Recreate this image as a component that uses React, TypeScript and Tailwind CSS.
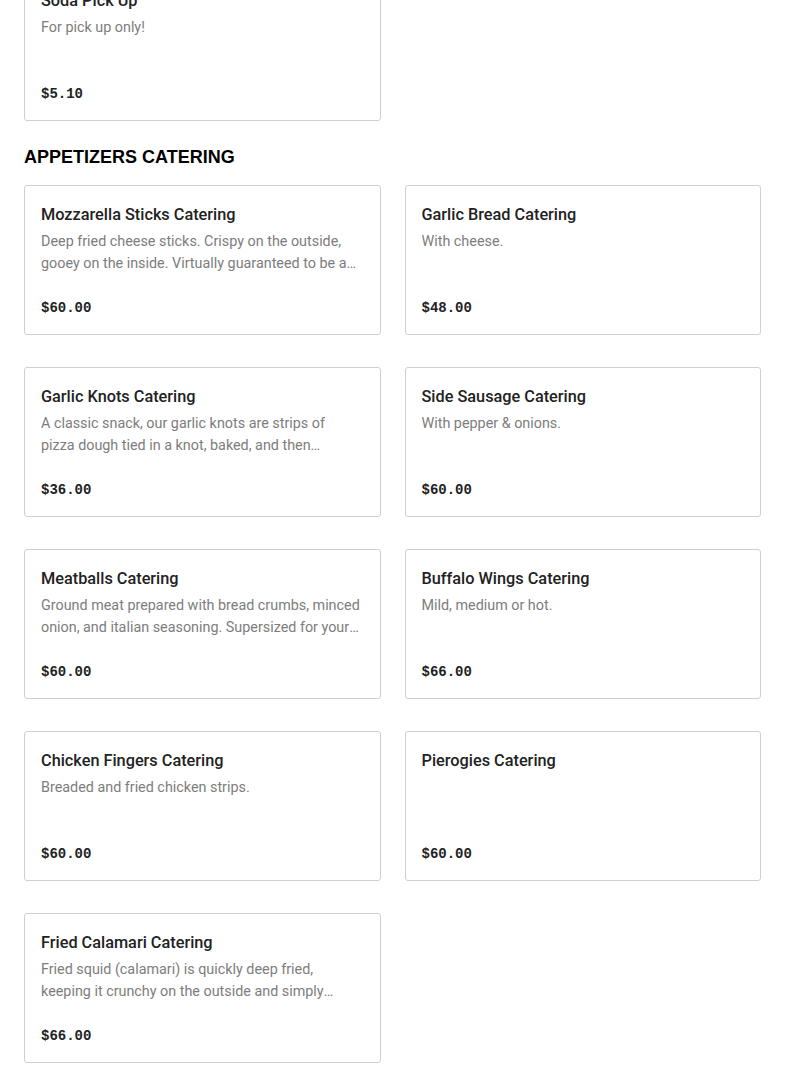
import React from "react";

type Item = { name: string; desc?: string; price: string };

const items: Item[] = [
  {
    name: "Mozzarella Sticks Catering",
    desc: "Deep fried cheese sticks. Crispy on the outside, gooey on the inside. Virtually guaranteed to be a crowd pleaser at any party or event.",
    price: "$60.00",
  },
  { name: "Garlic Bread Catering", desc: "With cheese.", price: "$48.00" },
  {
    name: "Garlic Knots Catering",
    desc: "A classic snack, our garlic knots are strips of pizza dough tied in a knot, baked, and then brushed with garlic butter.",
    price: "$36.00",
  },
  { name: "Side Sausage Catering", desc: "With pepper & onions.", price: "$60.00" },
  {
    name: "Meatballs Catering",
    desc: "Ground meat prepared with bread crumbs, minced onion, and italian seasoning. Supersized for your event.",
    price: "$60.00",
  },
  { name: "Buffalo Wings Catering", desc: "Mild, medium or hot.", price: "$66.00" },
  { name: "Chicken Fingers Catering", desc: "Breaded and fried chicken strips.", price: "$60.00" },
  { name: "Pierogies Catering", price: "$60.00" },
  {
    name: "Fried Calamari Catering",
    desc: "Fried squid (calamari) is quickly deep fried, keeping it crunchy on the outside and simply tender on the inside.",
    price: "$66.00",
  },
];

function Card({ item }: { item: Item }) {
  return (
    <div className="flex h-[150px] flex-col rounded-[3px] border border-[#cfcfcf] bg-white px-4 pb-4 pt-[17px]">
      <div className="font-['Roboto',sans-serif] text-[16.3px] font-medium leading-6 text-[#222]">
        {item.name}
      </div>
      {item.desc && (
        <div className="mt-1 line-clamp-2 pr-[2px] font-['Roboto',sans-serif] text-[14.35px] leading-[22px] text-[#7d7d7d]">
          {item.desc}
        </div>
      )}
      <div className="mt-auto font-['Liberation_Mono',monospace] text-[14px] font-bold leading-5 text-[#222]">
        {item.price}
      </div>
    </div>
  );
}

export default function App() {
  return (
    <div className="min-h-[1091px] overflow-hidden bg-white px-6">
      <div className="-mt-[29px] grid grid-cols-2 gap-6">
        <Card item={{ name: "Soda Pick Up", desc: "For pick up only!", price: "$5.10" }} />
      </div>
      <h2 className="mt-6 font-['Liberation_Sans',sans-serif] text-[18px] font-bold leading-6 text-black">
        APPETIZERS CATERING
      </h2>
      <div className="mt-4 grid grid-cols-2 gap-x-6 gap-y-8">
        {items.map((it) => (
          <Card key={it.name} item={it} />
        ))}
      </div>
    </div>
  );
}
